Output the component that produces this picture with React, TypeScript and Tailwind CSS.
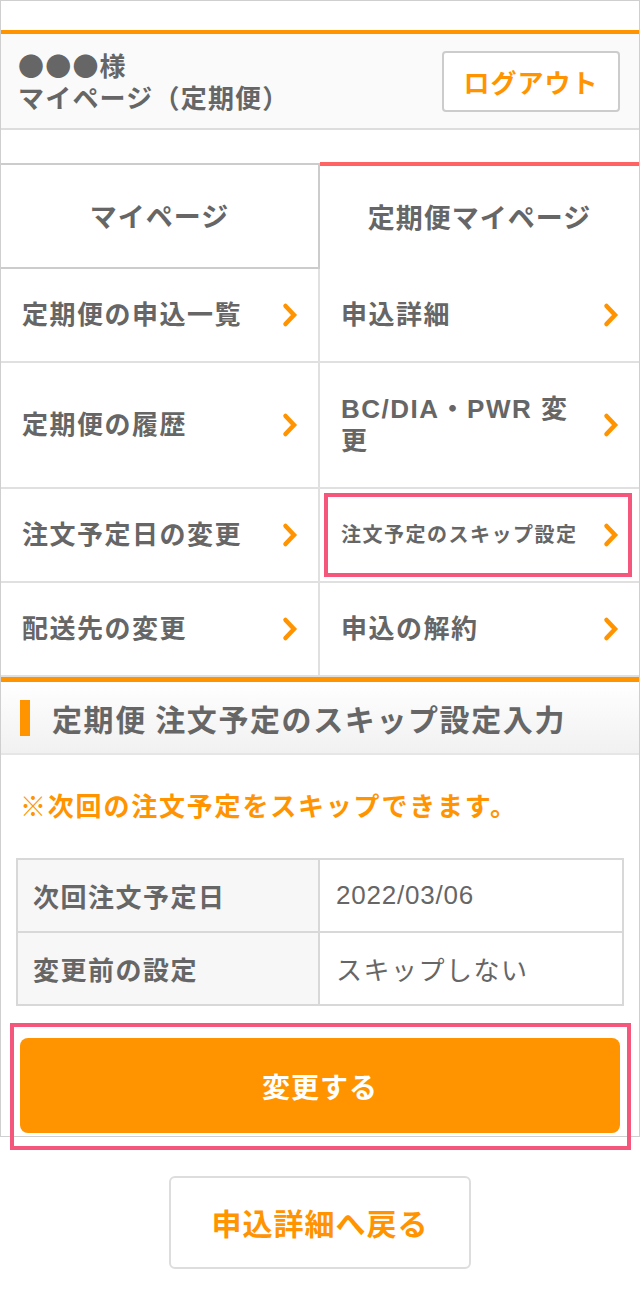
import React from "react"

const ORANGE = "#ff9400"

const Chevron = () => (
  <svg width="16" height="26" viewBox="0 0 16 26" className="shrink-0">
    <polyline
      points="3.5,4 12,13 3.5,22"
      fill="none"
      stroke={ORANGE}
      strokeWidth="4.5"
      strokeLinecap="round"
      strokeLinejoin="miter"
    />
  </svg>
)

type Item = { label: string; small?: boolean; active?: boolean }

const rows: [Item, Item][] = [
  [{ label: "定期便の申込一覧" }, { label: "申込詳細" }],
  [{ label: "定期便の履歴" }, { label: "BC/DIA・PWR 変更" }],
  [{ label: "注文予定日の変更" }, { label: "注文予定のスキップ設定", small: true, active: true }],
  [{ label: "配送先の変更" }, { label: "申込の解約" }],
]

const MenuCell = ({ item, left }: { item: Item; left: boolean }) => (
  <div
    className={`relative flex items-center gap-[20px] border-b-2 border-[#e0e0e0] py-[30px] pl-[21px] pr-[20px] ${
      left ? "border-r-2" : ""
    }`}
  >
    <div
      className={`flex-1 font-bold text-[#666666] ${
        item.small
          ? "whitespace-nowrap text-[20px] leading-[32px] tracking-[1.5px]"
          : "text-[26px] leading-[32px] tracking-[1.5px]"
      }`}
    >
      {item.label}
    </div>
    <Chevron />
    {item.active && (
      <div className="pointer-events-none absolute top-[4px] right-[7px] bottom-[4px] left-[4px] border-4 border-[#f5577c]" />
    )}
  </div>
)

export default function App() {
  return (
    <div className="min-h-[1302px] w-[640px] bg-white font-['Noto_Sans_CJK_JP',sans-serif]">
      <div className="border border-[#cfcfcf] pt-[29px]">
        {/* header */}
        <div className="flex h-[100px] items-center justify-between border-t-4 border-b-2 border-t-[#ff9400] border-b-[#dddddd] bg-[#fafafa] pl-[17px] pr-[19px]">
          <div className="text-[26px] leading-[32px] font-bold tracking-[1.2px] text-[#666666]">
            <div>●●●様</div>
            <div>マイページ（定期便）</div>
          </div>
          <button className="flex h-[61px] w-[178px] items-center justify-center rounded-[4px] border-2 border-[#cccccc] bg-white text-[26px] font-bold tracking-[1px] text-[#ff9400]">
            ログアウト
          </button>
        </div>

        <div className="h-[32px]" />

        {/* tabs */}
        <div className="grid grid-cols-2">
          <div className="mt-[1px] flex h-[106px] items-center justify-center border-t-2 border-r-2 border-b-2 border-[#cccccc] text-[27px] font-bold tracking-[1px] text-[#666666]">
            マイページ
          </div>
          <div className="flex h-[107px] items-center justify-center border-t-4 border-[#ff6464] text-[27px] font-bold tracking-[1px] text-[#666666]">
            定期便マイページ
          </div>
        </div>

        {/* menu */}
        <div className="grid grid-cols-2 font-['Liberation_Sans','Noto_Sans_CJK_JP',sans-serif]">
          {rows.map(([l, r], i) => (
            <React.Fragment key={i}>
              <MenuCell item={l} left />
              <MenuCell item={r} left={false} />
            </React.Fragment>
          ))}
        </div>

        {/* section title */}
        <div className="flex h-[78px] items-center gap-[22px] border-t-[5px] border-b-2 border-t-[#ff9400] border-b-[#e6e6e6] bg-linear-to-b from-white to-[#f1f1f1] pl-[19px]">
          <div className="h-[36px] w-[10px] bg-[#ff9400]" />
          <h2 className="text-[30px] leading-[40px] font-bold tracking-[1.6px] text-[#666666]">
            定期便 注文予定のスキップ設定入力
          </h2>
        </div>

        {/* note */}
        <p className="pt-[32px] pl-[19px] text-[26px] leading-[36px] font-bold tracking-[1.8px] text-[#ff9400]">
          ※次回の注文予定をスキップできます。
        </p>

        {/* table */}
        <div className="mt-[35px] px-[15px]">
          <div className="border-2 border-[#d8d8d8] text-[26px] tracking-[1.5px] text-[#666666]">
            <div className="flex h-[73px] border-b-2 border-[#d8d8d8]">
              <div className="flex w-[302px] items-center border-r-2 border-[#d8d8d8] bg-[#f7f7f7] pl-[15px] font-bold">
                次回注文予定日
              </div>
              <div className="flex flex-1 items-center pl-[16px] font-['Liberation_Sans',sans-serif] tracking-[0.8px]">
                2022/03/06
              </div>
            </div>
            <div className="flex h-[71px]">
              <div className="flex w-[302px] items-center border-r-2 border-[#d8d8d8] bg-[#f7f7f7] pl-[15px] font-bold">
                変更前の設定
              </div>
              <div className="flex flex-1 items-center pl-[16px]">スキップしない</div>
            </div>
          </div>
        </div>

        {/* submit */}
        <div className="px-[19px] pt-[32px] pb-[3px]">
          <div className="relative">
            <button className="flex h-[95px] w-full items-center justify-center rounded-[8px] bg-[#ff9400] text-[28px] font-bold tracking-[1px] text-white">
              変更する
            </button>
            <div className="pointer-events-none absolute -top-[15px] -right-[11px] -bottom-[17px] -left-[10px] z-10 border-4 border-[#f5577c]" />
          </div>
        </div>
      </div>

      {/* back */}
      <div className="flex justify-center pt-[39px] pb-[32px]">
        <button className="flex h-[93px] w-[302px] items-center justify-center rounded-[6px] border-2 border-[#dddddd] bg-white text-[30px] font-bold tracking-[1px] text-[#ff9400]">
          申込詳細へ戻る
        </button>
      </div>
    </div>
  )
}
